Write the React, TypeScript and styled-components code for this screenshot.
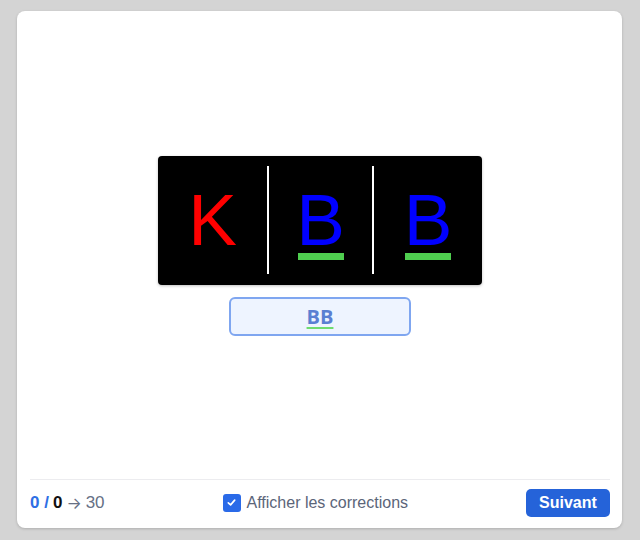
import { Fragment } from "react";
import styled, { createGlobalStyle } from "styled-components";

const GlobalStyle = createGlobalStyle`
  html, body {
    margin: 0;
    padding: 0;
    background: #d4d4d4;
    font-family: "Liberation Sans", Arial, sans-serif;
  }
  body {
    padding: 11px 18px 12px 17px;
  }
`;

const Card = styled.div`
  display: flex;
  flex-direction: column;
  height: 517px;
  box-sizing: border-box;
  background: #ffffff;
  border-radius: 8px;
  box-shadow: 0 1px 3px rgba(0, 0, 0, 0.18);
  padding: 0 12px 0 13px;
`;

const Stage = styled.div`
  flex: 1;
  display: flex;
  flex-direction: column;
  align-items: center;
  justify-content: center;
  gap: 12px;
  padding-top: 2px;
`;

const Board = styled.div`
  display: flex;
  align-items: stretch;
  width: 324px;
  height: 129px;
  box-sizing: border-box;
  padding: 10px 0 11px;
  background: #000000;
  border-radius: 4px;
  box-shadow: 0 1px 3px rgba(0, 0, 0, 0.25);
`;

const Cell = styled.div<{ $width: number }>`
  width: ${(p) => p.$width}px;
  display: flex;
  flex-direction: column;
  align-items: center;
  padding-top: 17px;
  box-sizing: border-box;
`;

const Separator = styled.div`
  width: 2px;
  background: #ffffff;
`;

const Letter = styled.span<{ $color: string }>`
  font-family: "Liberation Sans", Arial, sans-serif;
  font-size: 73px;
  line-height: 73px;
  color: ${(p) => p.$color};
`;

const Mark = styled.div<{ $visible: boolean }>`
  width: 46px;
  height: 7px;
  margin-top: -3px;
  background: ${(p) => (p.$visible ? "#4fce4f" : "transparent")};
`;

const Answer = styled.div`
  display: flex;
  align-items: center;
  justify-content: center;
  width: 182px;
  height: 39px;
  box-sizing: border-box;
  background: #eef4ff;
  border: 2px solid #7fa6f0;
  border-radius: 6px;
`;

const AnswerText = styled.span`
  font-family: "Open Sans", "Liberation Sans", sans-serif;
  font-weight: 700;
  font-size: 20px;
  line-height: 1;
  color: #5a7fd2;
  text-decoration: underline;
  text-decoration-color: #6fdc6f;
  text-decoration-thickness: 2px;
  text-underline-offset: 3px;
`;

const Footer = styled.div`
  display: flex;
  align-items: center;
  justify-content: space-between;
  height: 49px;
  border-top: 1px solid #ececef;
  box-sizing: border-box;
  padding-bottom: 3px;
`;

const Score = styled.div`
  font-size: 17px;
  color: #667085;
  display: flex;
  align-items: center;
  gap: 4px;
`;

const Num = styled.span<{ $tone: "blue" | "dark" | "muted" }>`
  font-weight: ${(p) => (p.$tone === "muted" ? 400 : 700)};
  color: ${(p) =>
    p.$tone === "blue" ? "#2f6fe4" : p.$tone === "dark" ? "#111111" : "#667085"};
`;

const Arrow = styled.span`
  font-family: Inter, "DejaVu Sans", sans-serif;
  font-size: 16px;
  color: #667085;
`;

const Toggle = styled.label`
  display: flex;
  align-items: center;
  gap: 6px;
  font-size: 16px;
  color: #5b6579;
`;

const Box = styled.span`
  display: flex;
  align-items: center;
  justify-content: center;
  width: 18px;
  height: 18px;
  border-radius: 3px;
  background: #2a6ae8;
`;

const NextButton = styled.button`
  width: 84px;
  height: 28px;
  border: none;
  border-radius: 5px;
  background: #2563d9;
  color: #ffffff;
  font-family: "Liberation Sans", Arial, sans-serif;
  font-weight: 700;
  font-size: 16px;
  cursor: pointer;
`;

const letters = [
  { ch: "K", color: "#ff0000", mark: false, width: 109 },
  { ch: "B", color: "#0000ff", mark: true, width: 103 },
  { ch: "B", color: "#0000ff", mark: true, width: 108 },
];

export default function App() {
  return (
    <>
      <GlobalStyle />
      <Card>
        <Stage>
          <Board>
            {letters.map((l, i) => (
              <Fragment key={i}>
                {i > 0 && <Separator />}
                <Cell $width={l.width}>
                  <Letter $color={l.color}>{l.ch}</Letter>
                  <Mark $visible={l.mark} />
                </Cell>
              </Fragment>
            ))}
          </Board>
          <Answer>
            <AnswerText>BB</AnswerText>
          </Answer>
        </Stage>
        <Footer>
          <Score>
            <Num $tone="blue">0 /</Num>
            <Num $tone="dark">0</Num>
            <Arrow>→</Arrow>
            <Num $tone="muted">30</Num>
          </Score>
          <Toggle>
            <Box>
              <svg width="11" height="11" viewBox="0 0 12 12" fill="none">
                <path d="M2.5 6.3 L5 8.6 L9.5 3.4" stroke="#fff" strokeWidth="1.8" strokeLinecap="round" strokeLinejoin="round" />
              </svg>
            </Box>
            Afficher les corrections
          </Toggle>
          <NextButton>Suivant</NextButton>
        </Footer>
      </Card>
    </>
  );
}
